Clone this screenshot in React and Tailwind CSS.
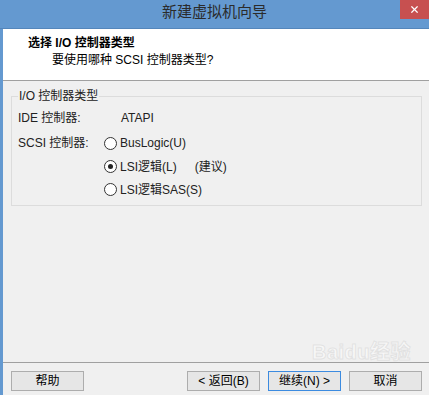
import { X } from "lucide-react";

const font = { fontFamily: '"Liberation Sans", "Noto Sans CJK SC", sans-serif' };

function Radio({ checked, label, note }) {
  return (
    <div className="flex items-center h-[23px]">
      <span className="w-[13px] h-[13px] rounded-full border border-[#333] bg-white flex items-center justify-center">
        {checked && <span className="w-[5px] h-[5px] rounded-full bg-[#222]" />}
      </span>
      <span className="ml-[3px]">{label}</span>
      {note && <span className="ml-[18px]">{note}</span>}
    </div>
  );
}

function Button({ children, primary }) {
  return (
    <button
      className={`w-[73px] h-[20px] text-[12px] leading-none text-black bg-[#e6e6e6] border whitespace-nowrap ${
        primary ? "border-[#3c8be0]" : "border-[#adadad]"
      }`}
    >
      {children}
    </button>
  );
}

export default function App() {
  return (
    <div
      className="relative w-[429px] h-[395px] flex flex-col bg-[#f0f0f0] overflow-hidden text-[12px] text-[#222]"
      style={font}
    >
      {/* Title bar */}
      <div className="relative h-[29px] bg-[#6499d0] border-b border-[#5486bb] flex items-center justify-center shrink-0">
        <span className="text-[15px] text-[#2b2b2b] -mt-[3px]">新建虚拟机向导</span>
        <div className="absolute right-0 top-0 w-[29px] h-[19px] bg-[#c75050] flex items-center justify-center">
          <X size={11} strokeWidth={2.6} className="text-white" />
        </div>
      </div>

      <div className="flex flex-1">
        {/* left window border */}
        <div className="w-[3px] bg-[#6499d0] shrink-0" />

        <div className="flex-1 flex flex-col">
          {/* Header */}
          <div className="h-[52px] bg-white border-b border-[#a0a0a0] shrink-0 pt-[6px]">
            <div className="pl-[25px] font-bold text-black text-[12px] leading-[16px]">
              选择 I/O 控制器类型
            </div>
            <div className="pl-[49px] mt-[1px] text-black leading-[16px]">
              要使用哪种 SCSI 控制器类型?
            </div>
          </div>

          {/* Group box */}
          <fieldset className="mt-[8px] ml-[8px] mr-[7px] h-[117px] border border-[#dcdcdc] px-[6px]">
            <legend className="px-[1px] text-[#222] leading-[14px]">I/O 控制器类型</legend>
            <div className="flex items-center h-[24px] mt-[3px]">
              <span className="w-[103px]">IDE 控制器:</span>
              <span>ATAPI</span>
            </div>
            <div className="flex mt-[1px]">
              <span className="w-[86px] h-[24px] flex items-center">SCSI 控制器:</span>
              <div className="flex flex-col">
                <div className="h-[24px] flex items-center">
                  <Radio label="BusLogic(U)" />
                </div>
                <Radio checked label="LSI逻辑(L)" note="(建议)" />
                <Radio label="LSI逻辑SAS(S)" />
              </div>
            </div>
          </fieldset>

          <div className="flex-1" />

          {/* Footer */}
          <div className="border-t border-[#a0a0a0] h-[33px] shrink-0 flex items-center pl-[8px] pr-[7px] pt-[4px]">
            <Button>帮助</Button>
            <div className="flex-1" />
            <div className="flex gap-[8px]">
              <Button>&lt; 返回(B)</Button>
              <Button primary>继续(N) &gt;</Button>
              <Button>取消</Button>
            </div>
          </div>
        </div>
      </div>

      {/* watermark */}
      <div className="absolute left-[312px] top-[342px] pointer-events-none whitespace-nowrap">
        <span
          className="text-[20px] font-bold text-white/50 leading-none tracking-wide"
          style={{ WebkitTextStroke: "1px rgba(205,205,205,0.45)" }}
        >
          Baidu经验
        </span>
      </div>
    </div>
  );
}
